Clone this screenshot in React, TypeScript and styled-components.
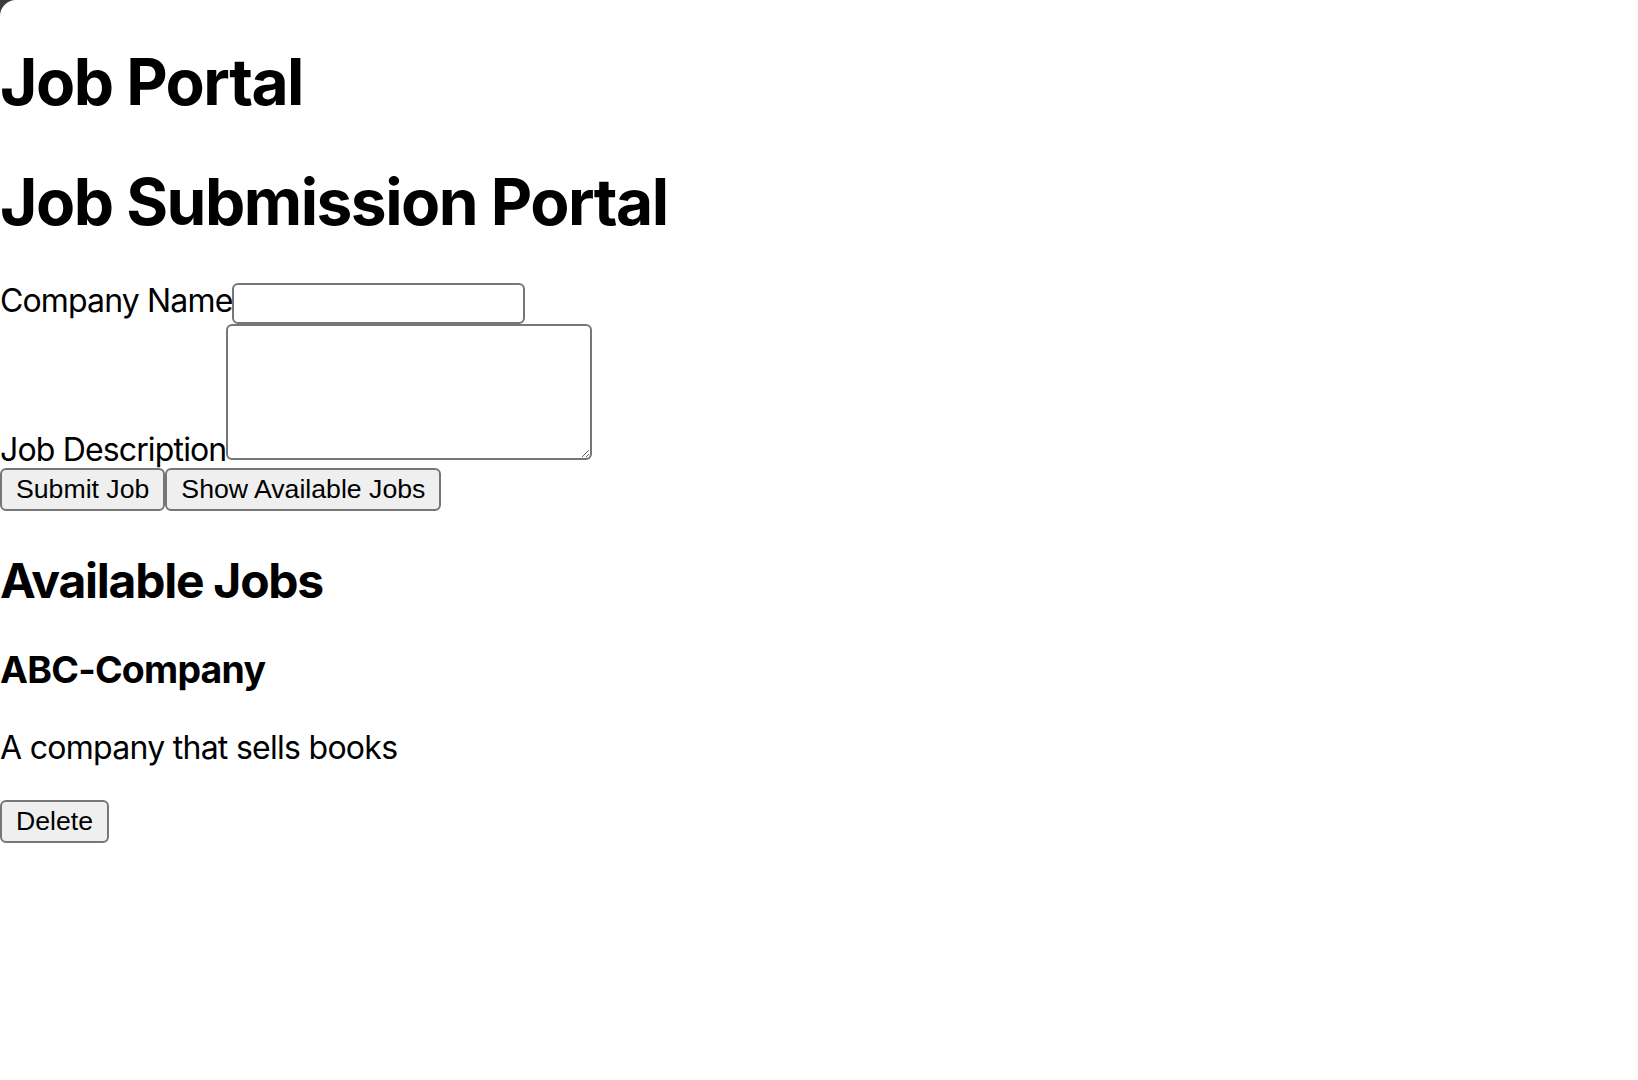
import React from "react";
import styled, { createGlobalStyle } from "styled-components";

const GlobalStyle = createGlobalStyle`
  html {
    background: #3b3b3b;
  }
  body {
    margin: 0;
    min-height: 1080px;
    background: #ffffff;
    border-top-left-radius: 16px;
    color: #000000;
    font-family: Inter, "Noto Sans", sans-serif;
    font-size: 32px;
    letter-spacing: -0.85px;
  }
  * {
    box-sizing: border-box;
  }
`;

const Page = styled.div`
  display: flow-root;
`;

const Title = styled.h1`
  font-size: 64px;
  font-weight: 700;
  margin: 42.88px 0;
  letter-spacing: -1.5px;
`;

const Form = styled.form`
  display: flex;
  flex-direction: column;
  align-items: flex-start;
`;

const Field = styled.div<{ $align: "top" | "bottom" }>`
  display: flex;
  align-items: ${(p) => (p.$align === "top" ? "flex-start" : "flex-end")};
  margin-top: ${(p) => (p.$align === "top" ? "0" : "0.5px")};
  margin-bottom: ${(p) => (p.$align === "top" ? "0" : "8px")};
`;

const Label = styled.label<{ $shift: number }>`
  font-size: 32px;
  line-height: 38.7px;
  margin-top: ${(p) => (p.$shift < 0 ? `${p.$shift}px` : "0")};
  margin-bottom: ${(p) => (p.$shift > 0 ? `${-p.$shift}px` : "0")};
`;

const TextInput = styled.input`
  width: 293px;
  height: 41px;
  border: 2px solid #767676;
  border-radius: 6px;
  padding: 2px 4px;
  font: 26px "Liberation Sans", Arial, sans-serif;
  background: #ffffff;
`;

const TextArea = styled.textarea`
  width: 366px;
  height: 136px;
  border: 2px solid #767676;
  border-radius: 6px;
  padding: 4px;
  font: 26px "Liberation Mono", monospace;
  background: #ffffff;
`;

const ButtonRow = styled.div`
  display: flex;
  gap: 0;
`;

const Button = styled.button`
  height: 43px;
  padding: 0 14px;
  border: 2px solid #767676;
  border-radius: 6px;
  background: #efefef;
  color: #000000;
  font-family: "Liberation Sans", Arial, sans-serif;
  font-size: 26.67px;
  letter-spacing: 0;
  line-height: 1;
`;

const SectionTitle = styled.h2`
  font-size: 48px;
  font-weight: 700;
  margin: 39.84px 0 37px;
  letter-spacing: -1.25px;
`;

const JobName = styled.h3`
  font-size: 37.44px;
  font-weight: 700;
  margin: 37px 0 0;
  letter-spacing: -0.75px;
`;

const JobText = styled.p`
  font-size: 32px;
  margin: 36px 0 32px;
  letter-spacing: -0.72px;
`;

const jobs = [{ name: "ABC-Company", description: "A company that sells books" }];

export default function App() {
  return (
    <Page>
      <GlobalStyle />
      <Title>Job Portal</Title>
      <Title>Job Submission Portal</Title>
      <Form onSubmit={(e) => e.preventDefault()}>
        <Field $align="top">
          <Label $shift={-1} htmlFor="company">Company Name</Label>
          <TextInput id="company" type="text" />
        </Field>
        <Field $align="bottom">
          <Label $shift={10} htmlFor="description">Job Description</Label>
          <TextArea id="description" />
        </Field>
        <ButtonRow>
          <Button type="submit">Submit Job</Button>
          <Button type="button">Show Available Jobs</Button>
        </ButtonRow>
      </Form>
      <SectionTitle>Available Jobs</SectionTitle>
      {jobs.map((job) => (
        <div key={job.name}>
          <JobName>{job.name}</JobName>
          <JobText>{job.description}</JobText>
          <Button type="button">Delete</Button>
        </div>
      ))}
    </Page>
  );
}
